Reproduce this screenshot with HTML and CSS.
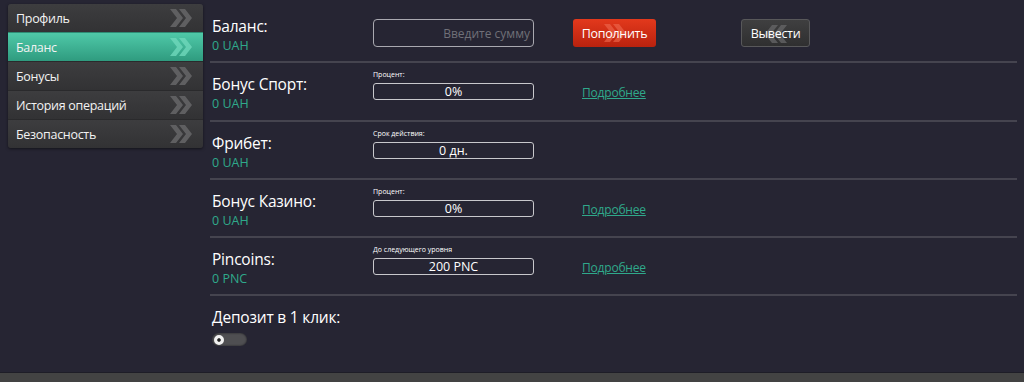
FILE: index.html
```html
<!DOCTYPE html>
<html lang="ru">
<head>
    <meta charset="UTF-8">
    <meta name="viewport" content="width=device-width, initial-scale=1.0">
    <title>Баланс</title>
    <link rel="stylesheet" href="styles.css">
</head>
<body>
    <div class="page">
        <div class="sidebar">
            <a href="#" class="menu-item">Профиль
                <svg class="chev" viewBox="0 0 24 18"><path d="M1 0h6l7 9-7 9H1l7-9z M10 0h6l7 9-7 9h-6l7-9z"/></svg>
            </a>
            <a href="#" class="menu-item active">Баланс
                <svg class="chev" viewBox="0 0 24 18"><path d="M1 0h6l7 9-7 9H1l7-9z M10 0h6l7 9-7 9h-6l7-9z"/></svg>
            </a>
            <a href="#" class="menu-item">Бонусы
                <svg class="chev" viewBox="0 0 24 18"><path d="M1 0h6l7 9-7 9H1l7-9z M10 0h6l7 9-7 9h-6l7-9z"/></svg>
            </a>
            <a href="#" class="menu-item">История операций
                <svg class="chev" viewBox="0 0 24 18"><path d="M1 0h6l7 9-7 9H1l7-9z M10 0h6l7 9-7 9h-6l7-9z"/></svg>
            </a>
            <a href="#" class="menu-item">Безопасность
                <svg class="chev" viewBox="0 0 24 18"><path d="M1 0h6l7 9-7 9H1l7-9z M10 0h6l7 9-7 9h-6l7-9z"/></svg>
            </a>
        </div>

        <div class="content">
            <div class="row">
                <div class="title">
                    <div class="name">Баланс:</div>
                    <div class="amount">0 UAH</div>
                </div>
                <div class="input-box">Введите сумму</div>
                <a href="#" class="btn btn-red">
                    <svg class="btn-chev" viewBox="0 0 24 18"><path d="M1 0h6l7 9-7 9H1l7-9z M10 0h6l7 9-7 9h-6l7-9z"/></svg>
                    <span>Пополнить</span>
                </a>
                <a href="#" class="btn btn-dark">
                    <svg class="btn-chev" viewBox="0 0 24 18"><path d="M23 0h-6l-7 9 7 9h6l-7-9z M14 0H8L1 9l7 9h6L7 9z"/></svg>
                    <span>Вывести</span>
                </a>
            </div>

            <div class="row">
                <div class="title">
                    <div class="name">Бонус Спорт:</div>
                    <div class="amount">0 UAH</div>
                </div>
                <div class="field">
                    <div class="field-label">Процент:</div>
                    <div class="field-box">0%</div>
                </div>
                <a href="#" class="more">Подробнее</a>
            </div>

            <div class="row">
                <div class="title">
                    <div class="name">Фрибет:</div>
                    <div class="amount">0 UAH</div>
                </div>
                <div class="field">
                    <div class="field-label">Срок действия:</div>
                    <div class="field-box">0 дн.</div>
                </div>
            </div>

            <div class="row">
                <div class="title">
                    <div class="name">Бонус Казино:</div>
                    <div class="amount">0 UAH</div>
                </div>
                <div class="field">
                    <div class="field-label">Процент:</div>
                    <div class="field-box">0%</div>
                </div>
                <a href="#" class="more">Подробнее</a>
            </div>

            <div class="row">
                <div class="title">
                    <div class="name">Pincoins:</div>
                    <div class="amount">0 PNC</div>
                </div>
                <div class="field">
                    <div class="field-label">До следующего уровня</div>
                    <div class="field-box">200 PNC</div>
                </div>
                <a href="#" class="more">Подробнее</a>
            </div>

            <div class="row last">
                <div class="title">
                    <div class="name">Депозит в 1 клик:</div>
                    <div class="toggle"><span class="knob"></span></div>
                </div>
            </div>
        </div>
    </div>
    <footer></footer>
</body>
</html>
```

FILE: styles.css
```css
body {
    font-family: "Open Sans", "Noto Sans", sans-serif;
    margin: 0;
    padding: 0;
    background-color: #262533;
    color: #fff;
    height: 382px;
    overflow: hidden;
    display: flex;
    flex-direction: column;
}
a {
    color: inherit;
    text-decoration: none;
}
.page {
    display: flex;
    height: 373px;
}
.sidebar {
    width: 195px;
    margin: 4px 0 0 8px;
    align-self: flex-start;
    display: flex;
    flex-direction: column;
    border-radius: 3px;
    overflow: hidden;
    box-shadow: 0 1px 3px rgba(0,0,0,0.5);
}
.menu-item {
    height: 28px;
    padding: 0 10px 0 8px;
    display: flex;
    align-items: center;
    justify-content: space-between;
    font-size: 12.5px;
    letter-spacing: -0.3px;
    color: #f2f2f2;
    background: linear-gradient(#3d3d3f, #323234);
    border-top: 1px solid #2a2a2c;
}
.menu-item:first-child {
    border-top: none;
}
.menu-item.active {
    background: linear-gradient(#4fc9a8, #2f9b7f);
    border-top: 1px solid #2e8c74;
}
.chev {
    width: 24px;
    height: 18px;
    fill: #5f5f61;
}
.active .chev {
    fill: #6fd8bb;
    opacity: 0.8;
}
.content {
    margin-left: 7px;
    padding-top: 5px;
    width: 807px;
    display: flex;
    flex-direction: column;
}
.row {
    height: 56.25px;
    flex-shrink: 0;
    border-bottom: 2px solid #45444f;
    display: flex;
    align-items: flex-start;
}
.row.last {
    border-bottom: none;
}
.title {
    width: 163px;
    padding: 10px 0 0 2px;
    box-sizing: border-box;
}
.name {
    font-size: 15.5px;
    line-height: 22px;
    letter-spacing: -0.2px;
}
.amount {
    font-size: 12.5px;
    line-height: 17px;
    color: #2fa98b;
}
.input-box {
    margin-top: 14px;
    width: 161px;
    height: 28px;
    box-sizing: border-box;
    border: 1px solid #a9a9b0;
    border-radius: 4px;
    font-size: 12px;
    color: #707078;
    display: flex;
    align-items: center;
    justify-content: flex-end;
    padding-right: 3px;
}
.btn {
    margin-top: 14px;
    height: 28px;
    box-sizing: border-box;
    border-radius: 3px;
    font-size: 12.5px;
    letter-spacing: -0.3px;
    position: relative;
    display: flex;
    align-items: center;
    justify-content: center;
}
.btn span {
    position: relative;
}
.btn-chev {
    position: absolute;
    left: 50%;
    top: 5px;
    width: 24px;
    height: 18px;
    margin-left: -12px;
}
.btn-red {
    margin-left: 39px;
    width: 83px;
    background: linear-gradient(#e3391c, #b9220e);
}
.btn-red .btn-chev {
    fill: #f06a50;
    opacity: 0.6;
}
.btn-dark {
    margin-left: 85px;
    width: 69px;
    background: linear-gradient(#3f3f40, #2f2f30);
    border: 1px solid #58585a;
}
.btn-dark .btn-chev {
    fill: #6a6a6c;
    opacity: 0.7;
}
.field {
    width: 161px;
    padding-top: 7px;
}
.field-label {
    font-size: 7px;
    line-height: 10px;
    height: 13px;
}
.field-box {
    height: 17px;
    box-sizing: border-box;
    border: 1px solid #c8c8cc;
    border-radius: 3px;
    font-size: 12.5px;
    line-height: 15px;
    text-align: center;
}
.more {
    margin: 21px 0 0 48px;
    font-size: 12px;
    color: #2fa98b;
    text-decoration: underline;
    letter-spacing: -0.2px;
}
.toggle {
    margin-top: 5px;
    width: 35px;
    height: 13px;
    border-radius: 7px;
    background: #4f4f52;
    box-shadow: inset 0 0 2px #1a1a1e;
    display: flex;
    align-items: center;
    padding-left: 2px;
    box-sizing: border-box;
}
.knob {
    width: 10px;
    height: 10px;
    box-sizing: border-box;
    border-radius: 50%;
    background: #f0f0f0;
    border: 3px solid #f0f0f0;
    box-shadow: inset 0 0 0 2px #222;
}
footer {
    height: 9px;
    background: #434343;
    border-top: 1px solid #1e1d27;
}
```
